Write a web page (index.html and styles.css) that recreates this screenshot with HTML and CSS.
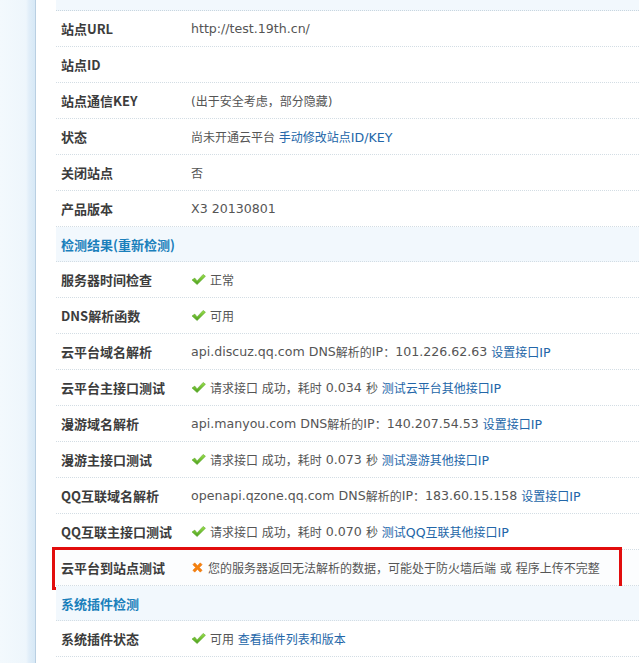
FILE: index.html
```html
<!DOCTYPE html>
<html lang="zh-CN">
<head>
<meta charset="utf-8">
<title>云平台诊断</title>
<link rel="stylesheet" href="styles.css">
</head>
<body>
<div class="page">
  <div class="sidebar"></div>
  <div class="main">
    <div class="table">
      <div class="topband"></div>
      <div class="row"><div class="label">站点URL</div><div class="value"><span class="en">http://test.19th.cn/</span></div></div>
      <div class="row"><div class="label">站点ID</div><div class="value"></div></div>
      <div class="row"><div class="label">站点通信KEY</div><div class="value">(出于安全考虑，部分隐藏)</div></div>
      <div class="row"><div class="label">状态</div><div class="value">尚未开通云平台 <a class="link" href="#">手动修改站点<span class="en">ID/KEY</span></a></div></div>
      <div class="row"><div class="label">关闭站点</div><div class="value">否</div></div>
      <div class="row"><div class="label">产品版本</div><div class="value"><span class="en">X3 20130801</span></div></div>
      <div class="row head"><div class="label">检测结果(重新检测)</div></div>
      <div class="row"><div class="label">服务器时间检查</div><div class="value"><svg class="ok" viewBox="0 0 16 14"><defs><linearGradient id="g1" x1="0" y1="0" x2="0" y2="1"><stop offset="0" stop-color="#9be04a"/><stop offset="1" stop-color="#4a9e1c"/></linearGradient></defs><path d="M1 7.5 L4 5.5 L6.5 8.5 L13 1.5 L15.5 3.5 L6.5 12.5 Z" fill="url(#g1)" stroke="#5aa62a" stroke-width="0.6" stroke-linejoin="round"/></svg>正常</div></div>
      <div class="row"><div class="label">DNS解析函数</div><div class="value"><svg class="ok" viewBox="0 0 16 14"><path d="M1 7.5 L4 5.5 L6.5 8.5 L13 1.5 L15.5 3.5 L6.5 12.5 Z" fill="url(#g1)" stroke="#5aa62a" stroke-width="0.6" stroke-linejoin="round"/></svg>可用</div></div>
      <div class="row"><div class="label">云平台域名解析</div><div class="value"><span class="en">api.discuz.qq.com DNS</span>解析的<span class="en">IP</span>：<span class="en">101.226.62.63 </span><a class="link" href="#">设置接口<span class="en">IP</span></a></div></div>
      <div class="row"><div class="label">云平台主接口测试</div><div class="value"><svg class="ok" viewBox="0 0 16 14"><path d="M1 7.5 L4 5.5 L6.5 8.5 L13 1.5 L15.5 3.5 L6.5 12.5 Z" fill="url(#g1)" stroke="#5aa62a" stroke-width="0.6" stroke-linejoin="round"/></svg>请求接口 成功，耗时<span class="en"> 0.034 </span>秒 <a class="link" href="#">测试云平台其他接口<span class="en">IP</span></a></div></div>
      <div class="row"><div class="label">漫游域名解析</div><div class="value"><span class="en">api.manyou.com DNS</span>解析的<span class="en">IP</span>：<span class="en">140.207.54.53 </span><a class="link" href="#">设置接口<span class="en">IP</span></a></div></div>
      <div class="row"><div class="label">漫游主接口测试</div><div class="value"><svg class="ok" viewBox="0 0 16 14"><path d="M1 7.5 L4 5.5 L6.5 8.5 L13 1.5 L15.5 3.5 L6.5 12.5 Z" fill="url(#g1)" stroke="#5aa62a" stroke-width="0.6" stroke-linejoin="round"/></svg>请求接口 成功，耗时<span class="en"> 0.073 </span>秒 <a class="link" href="#">测试漫游其他接口<span class="en">IP</span></a></div></div>
      <div class="row"><div class="label">QQ互联域名解析</div><div class="value"><span class="en">openapi.qzone.qq.com DNS</span>解析的<span class="en">IP</span>：<span class="en">183.60.15.158 </span><a class="link" href="#">设置接口<span class="en">IP</span></a></div></div>
      <div class="row"><div class="label">QQ互联主接口测试</div><div class="value"><svg class="ok" viewBox="0 0 16 14"><path d="M1 7.5 L4 5.5 L6.5 8.5 L13 1.5 L15.5 3.5 L6.5 12.5 Z" fill="url(#g1)" stroke="#5aa62a" stroke-width="0.6" stroke-linejoin="round"/></svg>请求接口 成功，耗时<span class="en"> 0.070 </span>秒 <a class="link" href="#">测试<span class="en">QQ</span>互联其他接口<span class="en">IP</span></a></div></div>
      <div class="row marked"><div class="label">云平台到站点测试</div><div class="value"><svg class="err" viewBox="0 0 14 14"><path d="M2 4 L4 2 L7 5 L10 2 L12 4 L9 7 L12 10 L10 12 L7 9 L4 12 L2 10 L5 7 Z" fill="#f5820f" stroke="#e8700a" stroke-width="0.6" stroke-linejoin="round"/></svg>您的服务器返回无法解析的数据，可能处于防火墙后端 或 程序上传不完整</div><div class="mark"></div></div>
      <div class="row head"><div class="label">系统插件检测</div></div>
      <div class="row"><div class="label">系统插件状态</div><div class="value"><svg class="ok" viewBox="0 0 16 14"><path d="M1 7.5 L4 5.5 L6.5 8.5 L13 1.5 L15.5 3.5 L6.5 12.5 Z" fill="url(#g1)" stroke="#5aa62a" stroke-width="0.6" stroke-linejoin="round"/></svg>可用 <a class="link" href="#">查看插件列表和版本</a></div></div>
    </div>
  </div>
</div>
</body>
</html>
```
FILE: styles.css
```css
html, body {
  margin: 0;
  padding: 0;
  background: #fff;
}
body {
  font-family: "DejaVu Sans", "Noto Sans CJK SC", sans-serif;
  font-size: 12px;
  color: #444;
  overflow: hidden;
}
.page {
  display: flex;
  min-height: 663px;
}
.sidebar {
  width: 35px;
  flex: none;
  background: linear-gradient(to right, #f3f9fd 0, #eef6fc 26px, #e1eef9 29px, #d8e9f6 34px);
  border-right: 1px solid #b9cfe2;
}
.main {
  flex: 1;
  padding-left: 20px;
}
.table {
  display: flex;
  flex-direction: column;
}
.topband {
  height: 10px;
  background: #f2f8fd;
  border-bottom: 1px dotted #c9d6df;
}
.row {
  position: relative;
  display: flex;
  align-items: center;
  height: 35px;
  border-bottom: 1px dotted #d3dde4;
}
.label {
  width: 130px;
  flex: none;
  padding-left: 5px;
  font-family: "Noto Sans CJK SC", "DejaVu Sans", sans-serif;
  font-weight: bold;
  font-size: 13px;
  color: #3c3c3c;
}
.value {
  display: flex;
  align-items: center;
  white-space: pre;
  color: #555;
}
.en {
  font-size: 12.6px;
}
.head {
  height: 34px;
  background: #f2f8fd;
}
.head .label {
  width: auto;
  color: #1a7fbb;
}
.link {
  color: #2366a8;
  text-decoration: none;
}
.ok {
  width: 15px;
  height: 13px;
  margin-right: 4px;
}
.err {
  width: 13px;
  height: 13px;
  margin-right: 4px;
}
.marked {
  background: #fcfdfe;
}
.mark {
  position: absolute;
  left: -4px;
  top: -3px;
  width: 570px;
  height: 43px;
  box-sizing: border-box;
  border: 3px solid #e20d0d;
  pointer-events: none;
}
```
